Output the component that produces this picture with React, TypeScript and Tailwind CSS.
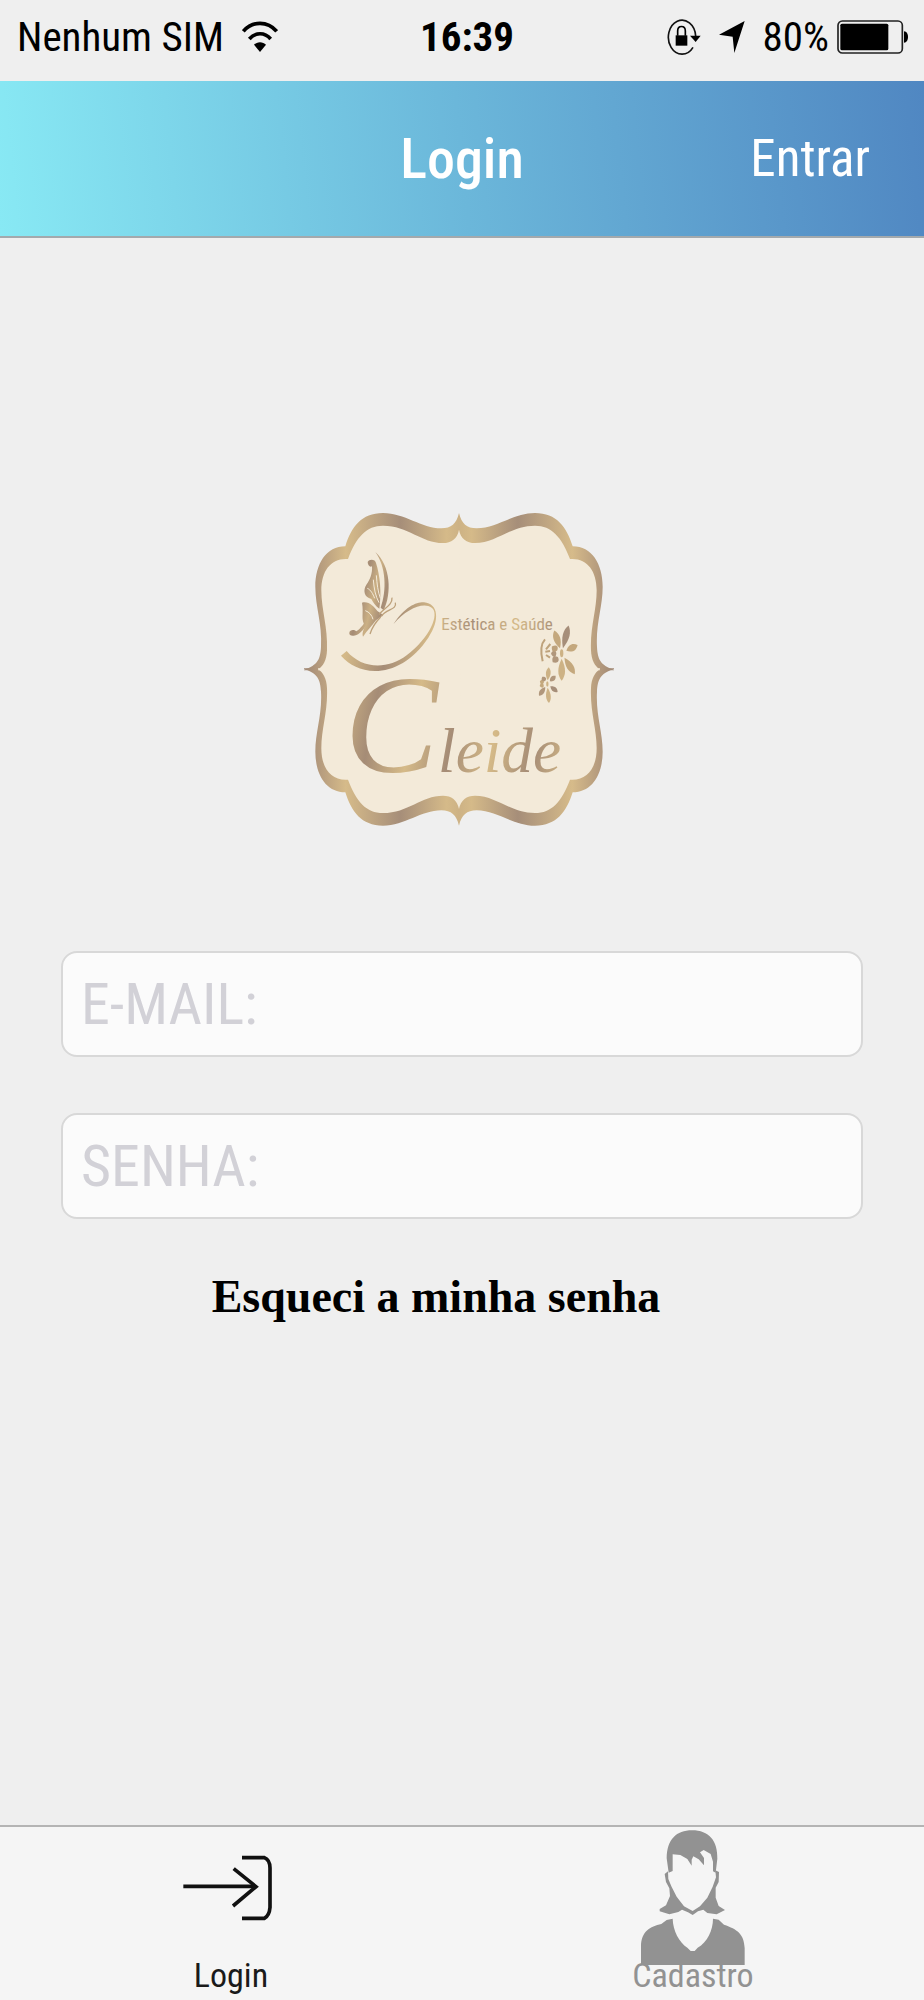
import { useState, type ReactNode } from "react";

const SANS = "font-['Roboto_Condensed','Roboto',sans-serif]";

function WifiIcon() {
  return (
    <svg width="36" height="34" viewBox="0 0 108 102" className="shrink-0">
      <g fill="none" stroke="#000" strokeWidth="11">
        <path d="M4 34C31 2 77 2 104 34" />
        <path d="M22 57C40 36 68 36 86 57" />
      </g>
      <path d="M36 74C45 64 63 64 72 74L54 96Z" />
    </svg>
  );
}

function RotationLockIcon() {
  return (
    <svg width="34" height="38" viewBox="0 0 102 114" className="shrink-0">
      <path d="M78 88A41 51 0 1 1 86 54" fill="none" stroke="#111" strokeWidth="5" />
      <path d="M69 53H101L86 72Z" />
      <rect x="26" y="52" width="35" height="31" />
      <path d="M32 53V39C32 21 55 21 55 39V53" fill="none" stroke="#000" strokeWidth="5" />
    </svg>
  );
}

function LocationIcon() {
  return (
    <svg width="26" height="34" viewBox="0 0 78 102" className="shrink-0">
      <path d="M77 3L46 99L41 50L0 44Z" />
    </svg>
  );
}

function BatteryIcon() {
  return (
    <svg width="72" height="34" viewBox="0 0 216 102" className="shrink-0">
      <rect x="3" y="3" width="193" height="96" rx="13" fill="none" stroke="#222" strokeWidth="5" />
      <rect x="10" y="11" width="144" height="80" rx="5" />
      <path d="M201 34C217 34 217 68 201 68Z" />
    </svg>
  );
}

function StatusBar() {
  return (
    <div className={`grid grid-cols-[1fr_auto_1fr] items-center h-[81px] pl-[17px] pr-[15px] pb-2 text-[41px] leading-[48px] text-black ${SANS}`}>
      <div className="flex items-center gap-[18px]">
        <span>Nenhum SIM</span>
        <WifiIcon />
      </div>
      <span className="pl-2 font-bold">16:39</span>
      <div className="flex items-center justify-end">
        <RotationLockIcon />
        <span className="flex px-[18px]">
          <LocationIcon />
        </span>
        <span className="pr-[8px]">80%</span>
        <BatteryIcon />
      </div>
    </div>
  );
}

// one quarter of the plaque, mirrored four times around its centre
const MIRRORS = [
  "",
  "matrix(-1 0 0 1 1014 0)",
  "matrix(1 0 0 -1 0 1014)",
  "matrix(-1 0 0 -1 1014 1014)",
];

// angle, length and colour of each petal
const LARGE_FLOWER: [number, number, string][] = [
  [14, 86, "#a68e79"],
  [62, 54, "#c4a87d"],
  [148, 74, "#c4a87d"],
  [180, 82, "#cdb285"],
  [225, 38, "#b1977c"],
  [268, 32, "#b1977c"],
  [305, 36, "#bda17b"],
  [342, 72, "#c4a87d"],
];

const SMALL_FLOWER: [number, number, string][] = [
  [5, 72, "#cdb285"],
  [45, 50, "#b1977c"],
  [128, 56, "#a68e79"],
  [175, 82, "#cdb285"],
  [215, 62, "#b1977c"],
  [255, 34, "#c4a87d"],
  [290, 34, "#c4a87d"],
  [325, 38, "#b1977c"],
];

function Flower({ x, y, scale, petals }: { x: number; y: number; scale: number; petals: [number, number, string][] }) {
  return (
    <g transform={`translate(${x} ${y}) scale(${scale})`}>
      <ellipse rx="5" ry="12" fill="#cdb285" />
      {petals.map(([angle, length, color]) => (
        <path
          key={angle}
          fill={color}
          transform={`rotate(${angle})`}
          d={`M0 -16C-14 ${-length * 0.55} -13 ${-length * 0.8} 0 ${-length}C13 ${-length * 0.8} 14 ${-length * 0.55} 0 -16Z`}
        />
      ))}
    </g>
  );
}

function Logo() {
  return (
    <svg width="320" height="316" viewBox="36 32 960 948" role="img" aria-label="Cleide Estética e Saúde">
      <defs>
        <linearGradient id="frame" gradientUnits="userSpaceOnUse" x1="507" y1="0" x2="972" y2="0">
          <stop offset="0" stopColor="#cdb285" />
          <stop offset="0.08" stopColor="#d5ba89" />
          <stop offset="0.38" stopColor="#a68e79" />
          <stop offset="0.73" stopColor="#d6bb8a" />
          <stop offset="0.92" stopColor="#b1977c" />
          <stop offset="1" stopColor="#a08875" />
        </linearGradient>
        <linearGradient id="gold" gradientUnits="userSpaceOnUse" x1="130" y1="0" x2="250" y2="24" spreadMethod="reflect">
          <stop offset="0" stopColor="#a58c76" />
          <stop offset="1" stopColor="#d5ba88" />
        </linearGradient>
        <linearGradient id="wing" gradientUnits="userSpaceOnUse" x1="215" y1="0" x2="248" y2="8" spreadMethod="reflect">
          <stop offset="0" stopColor="#a58c76" />
          <stop offset="1" stopColor="#cbb084" />
        </linearGradient>
      </defs>

      {MIRRORS.map((m) => (
        <path
          key={m}
          transform={m}
          fill="url(#frame)"
          d="M507 38C515 70 530 84 560 84C620 84 670 38 735 38C800 38 830 80 848 138C905 138 938 190 938 260C938 320 917 370 921 440C923 475 930 495 972 508V510H503Z"
        />
      ))}
      {MIRRORS.map((m) => (
        <path
          key={m}
          transform={m}
          fill="#f3ead9"
          d="M507 88C512 115 530 128 555 128C620 128 660 76 735 76C785 76 815 110 840 176C890 172 920 210 920 270C920 330 900 380 903 450C904 480 915 498 930 508V510H503Z"
        />
      ))}

      {/* butterfly */}
      <g fill="url(#wing)">
        <path d="M256 155C302 195 306 280 281 330L272 322C291 270 288 198 256 155Z" />
        <path d="M233 185C238 174 257 177 258 188C270 225 275 275 268 325C256 318 249 305 244 296C222 291 218 270 230 252C239 240 248 220 246 198C240 202 233 195 233 185Z" />
        <path d="M216 307C236 301 252 319 262 332L280 344L258 360C247 375 232 390 219 409C215 396 222 386 226 376C211 360 222 338 216 307Z" />
        <path d="M178 397C179 388 192 386 199 393C212 386 222 368 236 354L228 377C216 395 201 407 189 406C181 406 177 402 178 397Z" />
      </g>
      <g fill="none" stroke="#f3ead9" strokeWidth="3">
        <path d="M250 238C252 265 256 286 267 307M259 225C261 252 264 274 271 294M232 264C242 268 249 281 254 294M226 331C238 335 246 345 249 357M266 195C278 225 280 265 276 295" />
      </g>
      <g fill="none" stroke="#bda17b" strokeWidth="4">
        <path d="M267 343C281 324 308 315 306 292M274 348C288 325 322 329 316 307M240 401C247 379 258 364 272 350" />
      </g>

      {/* ribbon above the name */}
      <path
        d="M153 466L170 452C215 505 290 510 350 465C420 412 450 340 425 322C400 304 350 325 310 372C345 318 380 305 402 306C446 310 450 360 415 412C370 480 310 512 255 512C210 510 180 495 153 466Z"
        fill="url(#gold)"
      />

      <text x="454" y="388" fontSize="51" fill="url(#gold)" fontFamily="'Roboto Condensed', Roboto, sans-serif">
        Estética e Saúde
      </text>
      <text x="164" y="815" fill="url(#gold)" fontFamily="'Liberation Serif', serif" fontStyle="italic">
        <tspan fontSize="420">C</tspan>
        <tspan fontSize="190">leide</tspan>
      </text>

      <Flower x={815} y={459} scale={1} petals={LARGE_FLOWER} />
      <Flower x={772} y={551} scale={0.7} petals={SMALL_FLOWER} />
      <path d="M765 417C751 432 753 462 758 483M781 431L768 447M780 452L766 454M780 472L768 464" fill="none" stroke="#bea27b" strokeWidth="6" />
    </svg>
  );
}

function LoginIcon() {
  return (
    <svg width="106" height="136" viewBox="84 57 318 408" fill="none" stroke="#111" strokeWidth="11">
      <path d="M100 229H314" />
      <path d="M251 176L318 230L249 288" />
      <path d="M276 143H343Q360 150 360 174V292Q358 317 343 325H276" />
    </svg>
  );
}

function WomanIcon() {
  return (
    <svg width="106" height="136" viewBox="90 57 318 408" fill="#929292">
      <path d="M176 188L170 145C171 88 199 61 246 61C297 61 323 92 322 146L317 188L309 184V155L302 132L281 120L270 127L282 144V166L266 148L250 139L245 149V167L232 147L211 135L188 133V183Z" />
      <path d="M174 184L164 192L168 216L178 235L180 258L168 286L149 297V304L178 313L205 306L216 299L234 307L248 315L264 304L280 299L292 309L320 313L345 300L326 288L317 263V233L326 216L327 186L316 181L318 202L308 230L292 263L270 289L248 303L222 289L200 260L184 229L175 207Z" />
      <path d="M188 326L170 330L154 342C120 349 94 365 93 408V465H404V414C402 371 382 358 342 344L326 329L309 326C309 360 292 397 263 413L254 423H242L232 413C207 397 189 361 188 326Z" />
    </svg>
  );
}

interface FieldProps {
  id: string;
  type: string;
  label: string;
  value: string;
  onChange: (value: string) => void;
}

function Field({ id, type, label, value, onChange }: FieldProps) {
  return (
    <input
      id={id}
      type={type}
      value={value}
      aria-label={label}
      placeholder={label}
      onChange={(e) => onChange(e.target.value)}
      className={`block w-full h-[106px] rounded-2xl border-2 border-[#d8d8d8] bg-[#fbfbfb] px-[18px] text-[58px] text-black placeholder:text-[#d2d1d7] outline-none ${SANS}`}
    />
  );
}

interface TabProps {
  label: string;
  active: boolean;
  icon: ReactNode;
  onClick: () => void;
}

function Tab({ label, active, icon, onClick }: TabProps) {
  return (
    <button
      type="button"
      onClick={onClick}
      className={`flex flex-1 flex-col items-center pt-[2px] pb-[5px] cursor-pointer ${active ? "text-[#1a1a1a]" : "text-[#929292]"}`}
    >
      {icon}
      <span className="-mt-[10px] text-[34px] leading-[40px]">{label}</span>
    </button>
  );
}

export default function App() {
  const [email, setEmail] = useState("");
  const [senha, setSenha] = useState("");
  const [tab, setTab] = useState("login");

  return (
    <div className="flex min-h-screen flex-col bg-[#efefef]">
      <StatusBar />

      <header className={`grid grid-cols-[1fr_auto_1fr] items-center h-[157px] border-b-2 border-[#a3a9ad] bg-[linear-gradient(84deg,#88e9f4_0%,#6bb7da_50%,#5087c2_100%)] px-[54px] text-white ${SANS}`}>
        <h1 className="col-start-2 text-[56px] leading-[60px] font-medium">Login</h1>
        <button type="submit" form="login" className="justify-self-end text-[51px] leading-[60px] cursor-pointer">
          Entrar
        </button>
      </header>

      <main className="flex-1 px-[61px] pt-[273px]">
        <div className="flex justify-center">
          <Logo />
        </div>

        <form id="login" className="mt-[124px] flex flex-col gap-14" onSubmit={(e) => e.preventDefault()}>
          <Field id="email" type="email" label="E-MAIL:" value={email} onChange={setEmail} />
          <Field id="senha" type="password" label="SENHA:" value={senha} onChange={setSenha} />
        </form>

        <div className="mt-[50px] pr-[52px] text-center">
          <a href="#senha" className="font-['Liberation_Serif',serif] text-[46px] leading-[56px] font-bold text-black">
            Esqueci a minha senha
          </a>
        </div>
      </main>

      <nav className={`flex border-t-2 border-[#b4b4b4] bg-[#f5f5f5] ${SANS}`}>
        <Tab label="Login" active={tab === "login"} icon={<LoginIcon />} onClick={() => setTab("login")} />
        <Tab label="Cadastro" active={tab === "cadastro"} icon={<WomanIcon />} onClick={() => setTab("cadastro")} />
      </nav>
    </div>
  );
}
